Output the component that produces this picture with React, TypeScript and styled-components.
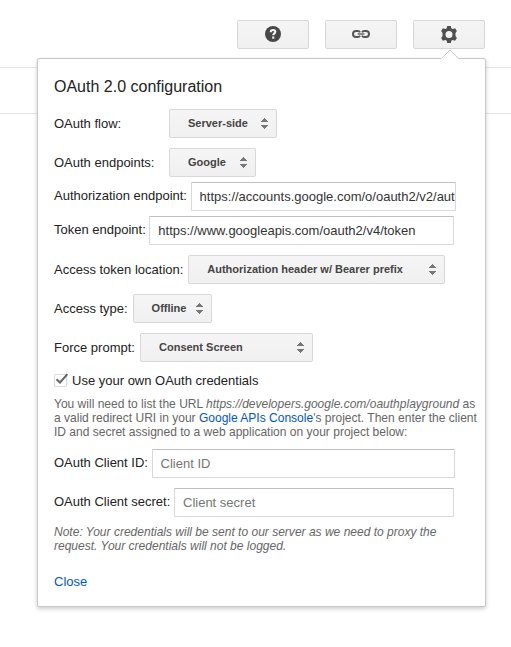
import React from 'react';
import styled, { createGlobalStyle } from 'styled-components';

const GlobalStyle = createGlobalStyle`
  *, *::before, *::after { box-sizing: border-box; }
  body {
    margin: 0;
    background: #fff;
    color: #222;
    font: 13px/15px "Liberation Sans", Arial, sans-serif;
    overflow: hidden;
  }
`;

const Page = styled.main`
  position: relative;
  width: 511px;
  height: 647px;
  overflow: hidden;
  background: #fff;
`;

const Header = styled.header`
  display: flex;
  justify-content: flex-end;
  align-items: flex-start;
  gap: 16px;
  height: 68px;
  padding: 20px 26px 0 0;
  border-bottom: 1px solid #e5e5e5;
`;

const Strip = styled.div`
  height: 46px;
  border-bottom: 1px solid #e5e5e5;
`;

const Button = styled.button`
  display: flex;
  align-items: center;
  height: 29px;
  padding: 0;
  border: 1px solid #d8d8d8;
  border-radius: 2px;
  background: linear-gradient(#f5f5f5, #f0f0f0);
  color: #444;
  font: bold 11px/27px "Liberation Sans", Arial, sans-serif;
`;

const ToolButton = styled(Button)`
  justify-content: center;
  width: 72px;
  padding-bottom: 1px;
`;

const SelectButton = styled(Button)<{ $width: number }>`
  justify-content: space-between;
  width: ${(p) => p.$width}px;
  padding: 0 8px 0 18px;
  white-space: nowrap;
`;

const Popup = styled.section`
  position: absolute;
  left: 37px;
  top: 58px;
  width: 449px;
  height: 549px;
  padding: 19px 7px 0 16px;
  border: 1px solid #c8c8c8;
  border-radius: 2px;
  background: #fff;
  box-shadow: 0 2px 4px rgba(0, 0, 0, 0.2);
`;

const Pointer = styled.svg`
  position: absolute;
  left: 403px;
  top: -10px;
`;

const Title = styled.h1`
  margin: 0 0 13px;
  font-size: 16px;
  font-weight: normal;
  line-height: 18px;
`;

const Row = styled.div<{ $gap: number }>`
  display: flex;
  align-items: center;
  height: 29px;
  margin-bottom: ${(p) => p.$gap}px;
`;

const Label = styled.label<{ $width: number; $raised?: boolean }>`
  flex: none;
  width: ${(p) => p.$width}px;
  padding-bottom: ${(p) => (p.$raised ? 2 : 0)}px;
  white-space: nowrap;
`;

const TextField = styled.input<{ $width: number }>`
  width: ${(p) => p.$width}px;
  height: 29px;
  padding: 0 0 1px 8px;
  border: 1px solid #d9d9d9;
  border-top-color: #c0c0c0;
  border-radius: 1px;
  outline: 0;
  background: #fff;
  color: #333;
  font: 13px "Liberation Sans", Arial, sans-serif;
  &::placeholder { color: #757575; opacity: 1; }
`;

const CheckRow = styled.div`
  display: flex;
  align-items: center;
  gap: 5px;
  height: 15px;
  margin: 11px 0 9px;
`;

const CheckBox = styled.span`
  display: flex;
  width: 13px;
  height: 13px;
  border: 1px solid #dcdcdc;
  border-radius: 1px;
  svg { flex: none; margin: -2px 0 0 0; overflow: visible; }
`;

const Hint = styled.p<{ $italic?: boolean }>`
  margin: 0 0 10px;
  color: #666;
  font-size: 12.02px;
  font-style: ${(p) => (p.$italic ? 'italic' : 'normal')};
  line-height: 14px;
  white-space: nowrap;
`;

const Link = styled.a`
  color: #05c;
  text-decoration: none;
`;

const CloseLink = styled(Link)`
  display: block;
  margin-top: 21px;
`;

const Arrows = () => (
  <svg width="7" height="11" viewBox="0 0 7 11" fill="#777" shapeRendering="crispEdges">
    <path d="M3 0h1v1h1v1h1v1h1v1H0V3h1V2h1V1h1zM0 7h7v1H6v1H5v1H4v1H3v-1H2V9H1V8H0z" />
  </svg>
);

const Select = ({ width, children }: { width: number; children: React.ReactNode }) => (
  <SelectButton type="button" $width={width}>
    <span>{children}</span>
    <Arrows />
  </SelectButton>
);

const HelpIcon = () => (
  <svg width="16" height="16" viewBox="0 0 16 16">
    <circle cx="8" cy="8" r="8" fill="#484848" />
    <path d="M5.8 6.2V5.7C5.8 4.4 6.7 4 8 4s2.3.7 2.3 1.8c0 1.6-2 1.6-2 3.5" fill="none" stroke="#f5f5f5" strokeWidth="2.1" />
    <path d="M7.2 10.5h2.1v2.2H7.2z" fill="#f5f5f5" />
  </svg>
);

const LinkIcon = () => (
  <svg width="18" height="8" viewBox="0 0 18 8" fill="none" stroke="#555" strokeWidth="2">
    <path d="M8 2.4Q7.3 1 5.8 1H4Q1 1 1 4t3 3h1.8q1.5 0 2.2-1.4M10 2.4Q10.7 1 12.2 1H14q3 0 3 3t-3 3h-1.8q-1.5 0-2.2-1.4" />
    <path d="M5.5 4h7" strokeWidth="1.3" />
  </svg>
);

const GearIcon = () => (
  <svg width="16" height="17" viewBox="0 0 16 17">
    <path
      fill="#505050"
      fillRule="evenodd"
      d="M6.2 0h3.6l.5 2.2 1.3.7 2.5-.7L15.9 5l-1.4 1.9v3.2l1.4 1.9-1.8 2.8-2.5-.7-1.3.7-.5 2.2H6.2l-.5-2.2-1.3-.7-2.5.7L.1 12l1.4-1.9V6.9L.1 5l1.8-2.8 2.5.7 1.3-.7zM8 5a3.5 3.5 0 1 0 0 7 3.5 3.5 0 0 0 0-7z"
    />
  </svg>
);

export default function App() {
  return (
    <>
      <GlobalStyle />
      <Page>
        <Header>
          <ToolButton aria-label="Help"><HelpIcon /></ToolButton>
          <ToolButton aria-label="Link"><LinkIcon /></ToolButton>
          <ToolButton aria-label="Settings"><GearIcon /></ToolButton>
        </Header>
        <Strip />
        <Popup>
          <Pointer width="18" height="11" viewBox="0 0 18 11">
            <path d="M.5 9.5 9 1l8.5 8.5V11H.5z" fill="#fff" />
            <path d="M.5 9.5 9 1l8.5 8.5" fill="none" stroke="#ccc" />
          </Pointer>
          <Title>OAuth 2.0 configuration</Title>
          <Row $gap={10}>
            <Label $width={115}>OAuth flow:</Label>
            <Select width={108}>Server-side</Select>
          </Row>
          <Row $gap={5}>
            <Label $width={115}>OAuth endpoints:</Label>
            <Select width={87}>Google</Select>
          </Row>
          <Row $gap={5}>
            <Label $width={136.6} $raised>Authorization endpoint:</Label>
            <TextField $width={265} defaultValue="https://accounts.google.com/o/oauth2/v2/auth" />
          </Row>
          <Row $gap={10}>
            <Label $width={95.3} $raised>Token endpoint:</Label>
            <TextField $width={305} defaultValue="https://www.googleapis.com/oauth2/v4/token" />
          </Row>
          <Row $gap={10}>
            <Label $width={134.3}>Access token location:</Label>
            <Select width={257}>Authorization header w/ Bearer prefix</Select>
          </Row>
          <Row $gap={10}>
            <Label $width={78.6}>Access type:</Label>
            <Select width={79}>Offline</Select>
          </Row>
          <Row $gap={0}>
            <Label $width={86}>Force prompt:</Label>
            <Select width={173}>Consent Screen</Select>
          </Row>
          <CheckRow>
            <CheckBox>
              <svg width="15" height="13" viewBox="0 0 15 13" fill="none" stroke="#666" strokeWidth="2">
                <path d="M1.5 6.2 5 9.5 12.4 1.2" />
              </svg>
            </CheckBox>
            <span>Use your own OAuth credentials</span>
          </CheckRow>
          <Hint>
            You will need to list the URL <em>https://developers.google.com/oauthplayground</em> as<br />
            a valid redirect URI in your <Link>Google APIs Console</Link>'s project. Then enter the client<br />
            ID and secret assigned to a web application on your project below:
          </Hint>
          <Row $gap={10}>
            <Label $width={97.6} $raised>OAuth Client ID:</Label>
            <TextField $width={303} placeholder="Client ID" />
          </Row>
          <Row $gap={8}>
            <Label $width={120} $raised>OAuth Client secret:</Label>
            <TextField $width={280} placeholder="Client secret" />
          </Row>
          <Hint $italic>
            Note: Your credentials will be sent to our server as we need to proxy the<br />
            request. Your credentials will not be logged.
          </Hint>
          <CloseLink>Close</CloseLink>
        </Popup>
      </Page>
    </>
  );
}
